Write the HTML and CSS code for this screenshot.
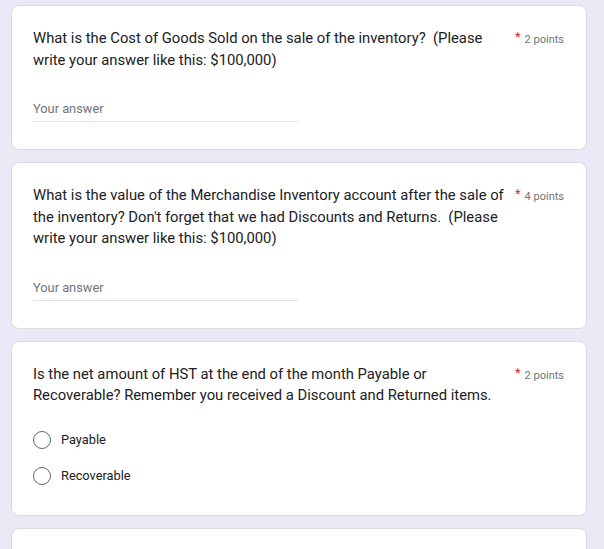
FILE: index.html
```html
<!DOCTYPE html>
<html>
<head>
<meta charset="utf-8">
<link rel="stylesheet" href="styles.css">
</head>
<body>
<main class="form">
  <section class="card">
    <div class="q-head">
      <div class="q-title">What is the Cost of Goods Sold on the sale of the inventory?&nbsp; (Please write your answer like this: $100,000)</div>
      <div class="q-points"><span class="req">*</span>2 points</div>
    </div>
    <div class="answer">Your answer</div>
  </section>
  <section class="card">
    <div class="q-head">
      <div class="q-title">What is the value of the Merchandise Inventory account after the sale of the inventory? Don't forget that we had Discounts and Returns.&nbsp; (Please write your answer like this: $100,000)</div>
      <div class="q-points"><span class="req">*</span>4 points</div>
    </div>
    <div class="answer">Your answer</div>
  </section>
  <section class="card card-choice">
    <div class="q-head">
      <div class="q-title">Is the net amount of HST at the end of the month Payable or Recoverable? Remember you received a Discount and Returned items.</div>
      <div class="q-points"><span class="req">*</span>2 points</div>
    </div>
    <div class="options">
      <label class="option"><span class="radio"></span>Payable</label>
      <label class="option"><span class="radio"></span>Recoverable</label>
    </div>
  </section>
  <section class="card card-cut"></section>
</main>
</body>
</html>
```
FILE: styles.css
```css
html, body {
  margin: 0;
  padding: 0;
  background: #ebe9f6;
  height: 549px;
  overflow: hidden;
}
.form {
  display: flex;
  flex-direction: column;
  gap: 12px;
  padding: 5px 17px 0 11px;
  font-family: Roboto, "Liberation Sans", sans-serif;
  color: #202124;
}
.card {
  background: #fff;
  border: 1px solid #dadce0;
  border-radius: 8px;
  padding: 22px 22px 27px 21px;
}
.card-choice {
  padding-bottom: 30px;
}
.card-cut {
  height: 60px;
}
.q-head {
  display: flex;
  align-items: flex-start;
}
.q-title {
  width: 478px;
  font-size: 14.8px;
  line-height: 21.5px;
  color: #202124;
}
.q-points {
  flex: 1;
  display: flex;
  justify-content: flex-end;
  font-size: 11px;
  color: #70757a;
  padding-top: 5px;
  gap: 4px;
}
.req {
  color: #d93025;
  font-size: 13px;
  line-height: 10px;
  margin-top: -1px;
}
.answer {
  margin-top: 30px;
  width: 265px;
  font-size: 12.8px;
  color: #70757a;
  padding-bottom: 5px;
  border-bottom: 1px solid #e0e0e0;
}
.options {
  margin-top: 24px;
  display: flex;
  flex-direction: column;
  gap: 18px;
}
.option {
  display: flex;
  align-items: center;
  gap: 10px;
  font-size: 12.8px;
  color: #202124;
}
.radio {
  width: 16px;
  height: 16px;
  border: 1.5px solid #5f6368;
  border-radius: 50%;
}
```
